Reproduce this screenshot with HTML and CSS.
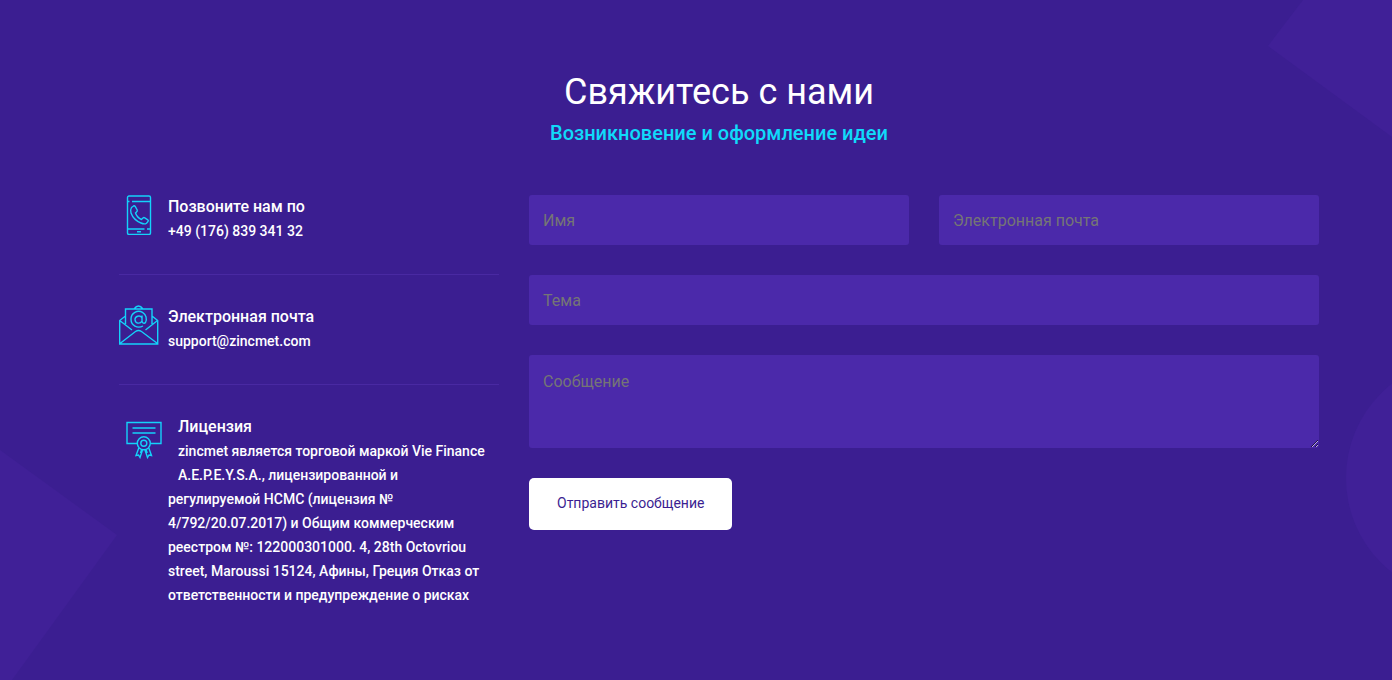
FILE: index.html
```html
<!DOCTYPE html>
<html lang="ru">
<head>
<meta charset="utf-8">
<meta name="viewport" content="width=device-width, initial-scale=1">
<title>Свяжитесь с нами</title>
<link rel="stylesheet" href="styles.css">
</head>
<body>
<section class="contact">
  <svg class="shape shape-left" width="117" height="230" viewBox="0 0 117 230" aria-hidden="true"><path d="M0 0L117 85L12 230H0Z"/></svg>
  <svg class="shape shape-top" width="124" height="137" viewBox="0 0 124 137" aria-hidden="true"><path d="M35 0H124V137L0 46Z"/></svg>
  <svg class="shape shape-right" width="46" height="200" viewBox="0 0 46 200" aria-hidden="true"><circle cx="120" cy="98" r="120"/></svg>
  <div class="container">
    <header class="heading">
      <h2 class="title">Свяжитесь с нами</h2>
      <p class="subtitle">Возникновение и оформление идеи</p>
    </header>
    <div class="columns">
      <div class="details">
        <div class="detail">
          <svg class="icon" width="40" height="40" viewBox="0 0 40 40" aria-hidden="true"><rect x="8.500" y="1" width="23" height="38.500" rx="1.500"/><path d="M8.500 6.500h2M13 6.500h18M8.500 34h17M28 34h3M18 36.800h4"/><path d="M12.500 12.500l2-1.500q1-.5 1.700.5l2 3.500q.5 1-.7 2l-1 1q1.500 4.500 6 6.500l1.500-1.500q.8-.8 1.800-.2l3 2q1 .8.200 1.800l-1.500 1.600q-2 1.500-5.500-.2Q14.500 25 12 18q-1-3 .5-5.500z"/></svg>
          <div class="detail-text">
            <h3 class="label">Позвоните нам по</h3>
            <p class="value">+49 (176) 839 341 32</p>
          </div>
        </div>
        <div class="detail">
          <svg class="icon" width="40" height="40" viewBox="0 0 40 40" aria-hidden="true"><path d="M6.500 11L.700 15.500V39h38V15.500L33 11M.700 15.500L13 25M38.500 15.500L26.500 25M1 38.500L16.500 26.500q3-2 6 0L38.500 38.500M6.500 19V4H33v15M15 4q4.500-6 9 0"/><path d="M23.500 17.500q1.800 1.500 3 0c1.800-3.500.6-8-3-10.200C18.500 4.500 12 8 12 14c0 6.800 6.500 9.800 12 7M23 10.500v5.500q0 1.200 1 1.800M22.800 12.500c-2-2.800-6.800-1.300-6.800 2 0 4 5 5 7 1.500"/></svg>
          <div class="detail-text">
            <h3 class="label">Электронная почта</h3>
            <p class="value">support@zincmet.com</p>
          </div>
        </div>
        <div class="license">
          <svg class="license-icon" width="36" height="38" viewBox="0 0 36 38" aria-hidden="true"><path d="M11 22.500H1V1.500h34V22.500H24.500M6.500 7h23M6.500 12h23"/><circle cx="17.800" cy="22.300" r="6.500"/><circle cx="17.800" cy="22.300" r="3"/><path d="M12.800 27L10 34.500l2.500-.5 1.500 2.500L16.500 29M22.800 27l2.700 7.500-2.500-.5-1.500 2.500L19 29M15.500 29l-1 3M20.200 29l1 3"/></svg>
          <h3 class="label">Лицензия</h3>
          <p class="value">zincmet является торговой маркой Vie Finance<br>A.E.P.E.Y.S.A., лицензированной и<br>регулируемой HCMC (лицензия №<br>4/792/20.07.2017) и Общим коммерческим<br>реестром №: 122000301000. 4, 28th Octovriou<br>street, Maroussi 15124, Афины, Греция Отказ от<br>ответственности и предупреждение о рисках</p>
        </div>
      </div>
      <form class="form">
        <input class="field" type="text" name="name" placeholder="Имя" aria-label="Имя">
        <input class="field" type="email" name="email" placeholder="Электронная почта" aria-label="Электронная почта">
        <input class="field wide" type="text" name="subject" placeholder="Тема" aria-label="Тема">
        <textarea class="field message wide" name="message" placeholder="Сообщение" aria-label="Сообщение"></textarea>
        <button class="submit" type="button">Отправить сообщение</button>
      </form>
    </div>
  </div>
</section>
</body>
</html>
```
FILE: styles.css
```css
* { box-sizing: border-box; }
body { margin: 0; background: #3b1e91; color: #fff; font-family: Roboto, "Noto Sans", sans-serif; }
h2, h3, p { margin: 0; }
.contact { position: relative; overflow: hidden; min-height: 100vh; padding: 70px 73px 72px 119px; }
.shape { position: absolute; fill: #402097; }
.shape-left { left: 0; bottom: 0; }
.shape-top { top: 0; right: 0; }
.shape-right { right: 0; top: 380px; }
.container { position: relative; }
.heading { text-align: center; margin-bottom: 49px; }
.title { font-size: 36px; line-height: 44px; font-weight: 400; }
.subtitle { font-size: 20px; line-height: 26px; margin-top: 6px; font-weight: 500; color: #10dafa; }
.columns { display: grid; grid-template-columns: minmax(0, 38fr) minmax(0, 79fr); gap: 30px; align-items: start; }
.detail { display: flex; gap: 9px; padding-bottom: 31px; margin-bottom: 30px; border-bottom: 1px solid #4929a2; }
.icon, .license-icon { fill: none; stroke: #14d2fa; stroke-width: 1.4; flex: none; }
.label { font-size: 16px; line-height: 24px; font-weight: 500; }
.value { font-size: 14px; line-height: 24px; font-weight: 500; white-space: nowrap; }
.license { padding-left: 49px; }
.license-icon { float: left; margin: 6px 16px 16px -42px; }
.form { display: grid; grid-template-columns: 1fr 1fr; gap: 30px; }
.field { width: 100%; min-width: 0; height: 50px; padding: 0 14px; border: 0; border-radius: 3px; background: #4b29aa; color: #fff; font-family: inherit; font-size: 16px; }
.field::placeholder { color: #757575; opacity: 1; }
.wide { grid-column: 1 / -1; }
.message { display: block; height: 93px; padding: 15px 14px; line-height: 24px; resize: vertical; }
.submit { justify-self: start; padding: 12px 28px 14px; border: 0; border-radius: 5px; background: #fff; color: #3b1e91; font-family: inherit; font-size: 14px; line-height: 26px; }
```
